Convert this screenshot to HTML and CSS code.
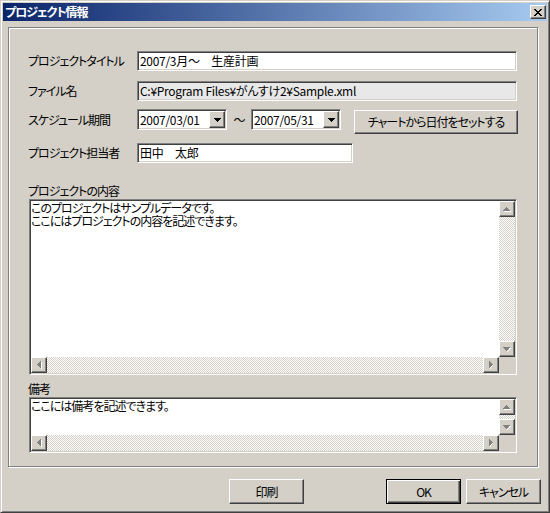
FILE: index.html
```html
<!DOCTYPE html>
<html lang="ja">
<head>
<meta charset="utf-8">
<title>プロジェクト情報</title>
<link rel="stylesheet" href="styles.css">
</head>
<body>
<div class="window">
  <div class="titlebar">
    <span class="title">プロジェクト情報</span>
    <div class="close raised">
      <svg width="8" height="7" viewBox="0 0 8 7"><path d="M0 0h2v1h-2zM6 0h2v1h-2zM1 1h2v1h-2zM5 1h2v1h-2zM2 2h4v1h-4zM3 3h2v1h-2zM2 4h4v1h-4zM1 5h2v1h-2zM5 5h2v1h-2zM0 6h2v1h-2zM6 6h2v1h-2z" fill="#000"/></svg>
    </div>
  </div>

  <div class="panel">
    <div class="row r1">
      <span class="lbl">プロジェクトタイトル</span>
      <div class="field w-long">2007/3月～　生産計画</div>
    </div>
    <div class="row r2">
      <span class="lbl">ファイル名</span>
      <div class="field readonly w-long">C:¥Program Files¥がんすけ2¥Sample.xml</div>
    </div>
    <div class="row r3">
      <span class="lbl lbl-combo">スケジュール期間</span>
      <div class="combo">
        <span class="combo-text">2007/03/01</span>
        <span class="dd raised"><svg width="7" height="4" viewBox="0 0 7 4"><path d="M0 0h7v1h-7zM1 1h5v1h-5zM2 2h3v1h-3zM3 3h1v1h-1z" fill="#000"/></svg></span>
      </div>
      <span class="tilde">～</span>
      <div class="combo">
        <span class="combo-text">2007/05/31</span>
        <span class="dd raised"><svg width="7" height="4" viewBox="0 0 7 4"><path d="M0 0h7v1h-7zM1 1h5v1h-5zM2 2h3v1h-3zM3 3h1v1h-1z" fill="#000"/></svg></span>
      </div>
      <div class="btn btn-chart">チャートから日付をセットする</div>
    </div>
    <div class="row r4">
      <span class="lbl">プロジェクト担当者</span>
      <div class="field w-person">田中　太郎</div>
    </div>

    <div class="sec-label">プロジェクトの内容</div>
    <div class="memo memo-big">
      <div class="memo-text"><div class="line">このプロジェクトはサンプルデータです。</div><div class="line">ここにはプロジェクトの内容を記述できます。</div></div>
      <div class="vscroll">
        <span class="sb raised"><svg width="8" height="5" viewBox="0 0 8 5"><path d="M4 1h1v1h-1zM5 2h1v1h-1zM6 3h1v1h-1zM1 4h7v1h-7z" fill="#fff"/><path d="M3 0h1v1h-1zM2 1h3v1h-3zM1 2h5v1h-5zM0 3h7v1h-7z" fill="#808080"/></svg></span>
        <span class="track"></span>
        <span class="sb raised"><svg width="8" height="5" viewBox="0 0 8 5"><path d="M1 1h7v1h-7zM6 2h1v1h-1zM5 3h1v1h-1zM4 4h1v1h-1z" fill="#fff"/><path d="M0 0h7v1h-7zM1 1h5v1h-5zM2 2h3v1h-3zM3 3h1v1h-1z" fill="#808080"/></svg></span>
      </div>
      <div class="hscroll">
        <span class="sb raised"><svg width="5" height="8" viewBox="0 0 5 8"><path d="M1 4h1v1h-1zM2 5h1v1h-1zM3 6h1v1h-1zM4 1h1v7h-1z" fill="#fff"/><path d="M3 0h1v7h-1zM2 1h1v5h-1zM1 2h1v3h-1zM0 3h1v1h-1z" fill="#808080"/></svg></span>
        <span class="track"></span>
        <span class="sb raised"><svg width="5" height="8" viewBox="0 0 5 8"><path d="M1 7h1v1h-1zM1 6h1v1h-1zM2 5h1v1h-1zM3 4h1v1h-1z" fill="#fff"/><path d="M0 0h1v7h-1zM1 1h1v5h-1zM2 2h1v3h-1zM3 3h1v1h-1z" fill="#808080"/></svg></span>
      </div>
      <div class="corner"></div>
    </div>

    <div class="sec-label sec-label2">備考</div>
    <div class="memo memo-small">
      <div class="memo-text"><div class="line">ここには備考を記述できます。</div></div>
      <div class="vscroll">
        <span class="sb raised"><svg width="8" height="5" viewBox="0 0 8 5"><path d="M4 1h1v1h-1zM5 2h1v1h-1zM6 3h1v1h-1zM1 4h7v1h-7z" fill="#fff"/><path d="M3 0h1v1h-1zM2 1h3v1h-3zM1 2h5v1h-5zM0 3h7v1h-7z" fill="#808080"/></svg></span>
        <span class="track"></span>
        <span class="sb raised"><svg width="8" height="5" viewBox="0 0 8 5"><path d="M1 1h7v1h-7zM6 2h1v1h-1zM5 3h1v1h-1zM4 4h1v1h-1z" fill="#fff"/><path d="M0 0h7v1h-7zM1 1h5v1h-5zM2 2h3v1h-3zM3 3h1v1h-1z" fill="#808080"/></svg></span>
      </div>
      <div class="hscroll">
        <span class="sb raised"><svg width="5" height="8" viewBox="0 0 5 8"><path d="M1 4h1v1h-1zM2 5h1v1h-1zM3 6h1v1h-1zM4 1h1v7h-1z" fill="#fff"/><path d="M3 0h1v7h-1zM2 1h1v5h-1zM1 2h1v3h-1zM0 3h1v1h-1z" fill="#808080"/></svg></span>
        <span class="track"></span>
        <span class="sb raised"><svg width="5" height="8" viewBox="0 0 5 8"><path d="M1 7h1v1h-1zM1 6h1v1h-1zM2 5h1v1h-1zM3 4h1v1h-1z" fill="#fff"/><path d="M0 0h1v7h-1zM1 1h1v5h-1zM2 2h1v3h-1zM3 3h1v1h-1z" fill="#808080"/></svg></span>
      </div>
      <div class="corner"></div>
    </div>
  </div>

  <div class="actions">
    <div class="btn btn-action btn-print">印刷</div>
    <div class="btn btn-action btn-default btn-ok">OK</div>
    <div class="btn btn-action btn-cancel">キャンセル</div>
  </div>
</div>
</body>
</html>
```

FILE: styles.css
```css
* { box-sizing: border-box; }

html, body {
  margin: 0;
  padding: 0;
  background: #d4d0c8;
}

body {
  font-family: "Noto Sans CJK JP", "Noto Sans", sans-serif;
  font-size: 12px;
  font-feature-settings: "palt";
  letter-spacing: -1px;
  color: #000;
}

.window {
  width: 550px;
  height: 513px;
  background: #d4d0c8;
  border: 1px solid;
  border-color: #d4d0c8 #404040 #404040 #d4d0c8;
  box-shadow: inset 1px 1px 0 #fff, inset -1px -1px 0 #808080;
  padding: 2px;
  display: flex;
  flex-direction: column;
}

.titlebar {
  height: 18px;
  flex: none;
  display: flex;
  align-items: center;
  padding-left: 2px;
  background: linear-gradient(to right, #0a246a, #a6caf0);
}

.title {
  color: #fff;
  font-weight: bold;
  font-size: 12px;
  line-height: 18px;
}

.raised {
  border: 1px solid;
  border-color: #fff #404040 #404040 #fff;
  box-shadow: inset -1px -1px 0 #808080;
  background: #d4d0c8;
  display: flex;
  align-items: center;
  justify-content: center;
}

.close {
  margin-left: auto;
  margin-right: 1px;
  width: 16px;
  height: 14px;
}

.panel {
  flex: none;
  margin: 6px 0 0 5px;
  width: 530px;
  height: 440px;
  border: 1px solid #808080;
  box-shadow: 1px 1px 0 #fff, inset 1px 1px 0 #fff;
  padding: 23px 0 0 19px;
  display: flex;
  flex-direction: column;
}

.row {
  display: flex;
  align-items: center;
  flex: none;
}

.r1 { height: 20px; }
.r2 { height: 20px; margin-top: 10px; }
.r3 { height: 25px; margin-top: 8px; align-items: flex-start; }
.r4 { height: 20px; margin-top: 9px; }

.lbl {
  width: 109px;
  flex: none;
  white-space: nowrap;
  line-height: 16px;
}

.lbl-combo {
  height: 21px;
  display: flex;
  align-items: center;
}

.field {
  height: 20px;
  border: 1px solid;
  border-color: #808080 #fff #fff #808080;
  box-shadow: inset 1px 1px 0 #404040, inset -1px -1px 0 #d4d0c8;
  background: #fff;
  padding: 0 0 0 2px;
  display: flex;
  align-items: center;
  white-space: nowrap;
  overflow: hidden;
  line-height: 16px;
  letter-spacing: -0.3px;
}

.readonly { background: #e8e8e8; }
.w-long { width: 380px; }
.w-person { width: 216px; }

.combo {
  width: 90px;
  height: 21px;
  flex: none;
  border: 1px solid;
  border-color: #808080 #fff #fff #808080;
  box-shadow: inset 1px 1px 0 #404040, inset -1px -1px 0 #d4d0c8;
  background: #fff;
  padding: 1px;
  display: flex;
  align-items: center;
}

.combo-text {
  padding-left: 1px;
  line-height: 16px;
  white-space: nowrap;
  letter-spacing: -0.3px;
}

.dd {
  margin-left: auto;
  width: 16px;
  height: 17px;
  flex: none;
}

.tilde {
  width: 24px;
  height: 21px;
  flex: none;
  display: flex;
  align-items: center;
  justify-content: center;
  padding-left: 1px;
  letter-spacing: 0;
}

.btn {
  border: 1px solid;
  border-color: #fff #404040 #404040 #fff;
  box-shadow: inset -1px -1px 0 #808080;
  background: #d4d0c8;
  display: flex;
  align-items: center;
  justify-content: center;
  white-space: nowrap;
  line-height: 16px;
}

.btn-chart {
  margin-left: 13px;
  margin-top: 1px;
  width: 164px;
  height: 24px;
}

.sec-label {
  flex: none;
  margin-top: 20px;
  height: 16px;
  line-height: 16px;
}

.sec-label2 { margin-top: 6px; }

.memo {
  flex: none;
  margin-left: 1px;
  width: 488px;
  border: 1px solid;
  border-color: #808080 #fff #fff #808080;
  box-shadow: inset 1px 1px 0 #404040, inset -1px -1px 0 #d4d0c8;
  padding: 1px;
  background: #fff;
  display: grid;
  grid-template-columns: 1fr 16px;
  grid-template-rows: 1fr 16px;
}

.memo-big { height: 176px; }
.memo-small { height: 56px; }

.memo-text {
  grid-column: 1;
  grid-row: 1;
  background: #fff;
  padding: 0;
  white-space: nowrap;
}

.line {
  height: 13px;
  line-height: 13px;
}

.vscroll {
  grid-column: 2;
  grid-row: 1;
  display: flex;
  flex-direction: column;
}

.hscroll {
  grid-column: 1;
  grid-row: 2;
  display: flex;
}

.corner {
  grid-column: 2;
  grid-row: 2;
  background: #d4d0c8;
}

.sb {
  width: 16px;
  height: 16px;
  flex: none;
}

.track {
  flex: 1;
  background: repeating-conic-gradient(#fff 0 25%, #d4d0c8 0 50%) 0 0 / 2px 2px;
}

.actions {
  flex: none;
  display: flex;
  margin-top: 12px;
  padding-left: 226px;
}

.btn-action {
  width: 75px;
  height: 25px;
}

.btn-ok { margin-left: 82px; }
.btn-cancel { margin-left: 5px; }

.btn-default {
  border: 1px solid #000;
  box-shadow: inset 1px 1px 0 #fff, inset -1px -1px 0 #404040, inset -2px -2px 0 #808080;
}
```
